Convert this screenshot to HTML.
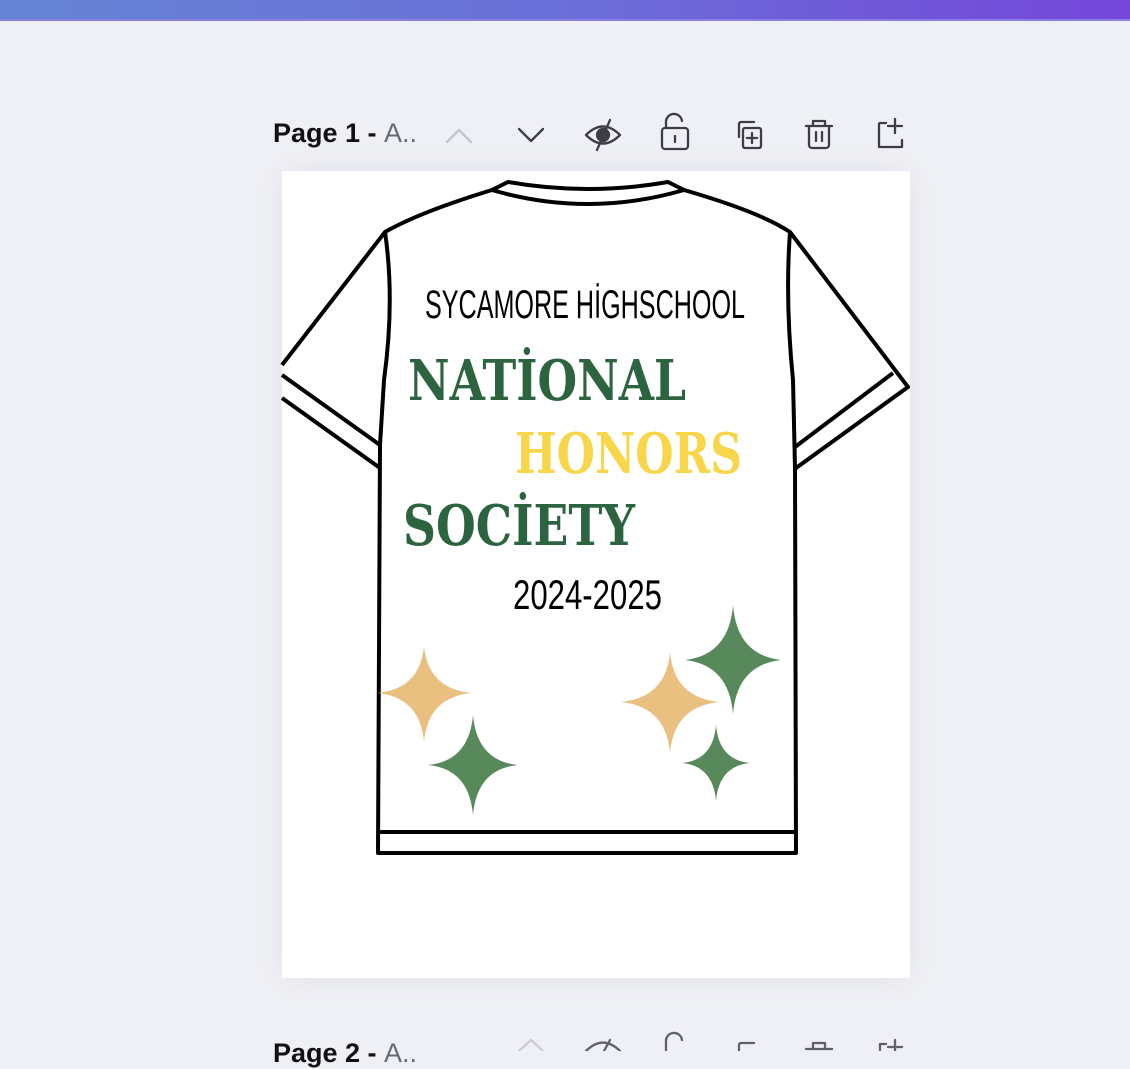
<!DOCTYPE html>
<html><head><meta charset="utf-8"><style>
html,body{margin:0;padding:0;width:1130px;height:1051px;overflow:hidden;background:#eff0f5;font-family:"Liberation Sans",sans-serif}
.bar{position:absolute;left:0;top:0;width:1130px;height:19px;background:linear-gradient(90deg,#6584d4,#6b6fd8 50%,#7446d9);border-bottom:2px solid #8a7fe0}
.page{position:absolute;left:282px;top:171px;width:628px;height:807px;background:#fff;box-shadow:0 0 30px rgba(0,0,0,0.06)}
.lbl{position:absolute;font-size:27px;font-weight:bold;color:#111}
.lbl span{color:#666a73;font-weight:normal}
svg{position:absolute;left:0;top:0}
</style></head><body>
<div class="bar"></div>
<div class="page"></div>
<div class="lbl" style="left:273px;top:118px">Page 1 - <span>A..</span></div>
<div class="lbl" style="left:273px;top:1038px">Page 2 - <span>A..</span></div>
<svg width="1130" height="1051" viewBox="0 0 1130 1051">
<g fill="none" stroke-linecap="round" stroke-linejoin="round" stroke-width="2.3">
 <path d="M447,142 L459,130 L471,142" stroke="#c4c5cc"/>
 <path d="M519,129 L531,141 L543,129" stroke="#3d3e45"/>
 <g stroke="#3d3e45">
 <path d="M586,135 Q603,118 620,135 Q603,152 586,135Z"/>
 <circle cx="603" cy="135" r="6" fill="#3d3e45"/>
 <line x1="610" y1="120" x2="597" y2="150"/>
 <rect x="662" y="128" width="26" height="21" rx="3"/>
 <path d="M666,128 V123 A8,8 0 0 1 682,121"/>
 <line x1="675" y1="136" x2="675" y2="142"/>
 <path d="M739,137 V124 a2,2 0 0 1 2,-2 H754"/>
 <rect x="743" y="128" width="18" height="20" rx="2"/>
 <path d="M752,133 V143 M747,138 H757"/>
 <path d="M806,126 H832 M813,126 V121 H825 V126 M809,126 V145 a3,3 0 0 0 3,3 H826 a3,3 0 0 0 3,-3 V126 M816,132 V141 M822,132 V141"/>
 <path d="M886,123 H880 a1,1 0 0 0 -1,1 V147 H902 V140 M895,119 V133 M888,126 H902"/>
 </g>
 <g stroke="#3d3e45" opacity="0.8">
 <path d="M519,1051 L531,1040 L543,1051" stroke="#c4c5cc"/>
 <path d="M586,1051 Q603,1034 620,1051"/><line x1="610" y1="1040" x2="604" y2="1051"/>
 <path d="M666,1051 V1042 A8,8 0 0 1 682,1040"/>
 <path d="M739,1051 V1045 a2,2 0 0 1 2,-2 H754"/>
 <path d="M806,1049 H832 M813,1049 V1043 H825 V1049"/>
 <path d="M895,1040 V1051 M888,1047 H902 M886,1044 H880 V1051"/>
 </g>
</g>
<g fill="none" stroke="#000" stroke-width="4" stroke-linejoin="round">
 <path d="M508,182 Q588,196 668,182 L684,190 Q588,218 492,190 Z"/>
 <path d="M492,190 Q420,212 385,232 L282,365"/>
 <path d="M282,375 L380,445 M282,398 L380,468"/>
 <path d="M385,232 Q395,300 384,380 L380,445 L378,853 H796 L795,468 L793,380 Q785,300 790,232 Q760,212 684,190"/>
 <path d="M790,232 L908,387 L796,468 M893,373 L795,447"/>
 <path d="M378,832 H795"/>
</g>
<g font-family="Liberation Sans Narrow,Liberation Sans,sans-serif">
 <text x="425" y="318" font-size="40" textLength="320" lengthAdjust="spacingAndGlyphs" fill="#000">SYCAMORE HİGHSCHOOL</text>
 <text x="513" y="609" font-size="42" textLength="149" lengthAdjust="spacingAndGlyphs" fill="#000">2024-2025</text>
</g>
<g font-family="DejaVu Serif,serif" font-weight="bold">
 <text x="408" y="400" font-size="56" textLength="278" lengthAdjust="spacingAndGlyphs" fill="#2c6440">NATİONAL</text>
 <text x="515" y="473" font-size="56" textLength="227" lengthAdjust="spacingAndGlyphs" fill="#f7d64a">HONORS</text>
 <text x="403" y="545" font-size="56" textLength="232" lengthAdjust="spacingAndGlyphs" fill="#2c6440">SOCİETY</text>
</g>
<path fill="#e9c07f" d="M424,646 Q428,689 472,693 Q428,697 424,742 Q420,697 377,693 Q420,689 424,646Z"/>
<path fill="#e9c07f" d="M670,652 Q674,698 720,702 Q674,706 670,753 Q666,706 620,702 Q666,698 670,652Z"/>
<path fill="#57895b" d="M473,715 Q477,761 518,765 Q477,769 473,815 Q469,769 428,765 Q469,761 473,715Z"/>
<path fill="#57895b" d="M733,605 Q737,655 781,660 Q737,665 733,714 Q729,665 685,660 Q729,655 733,605Z"/>
<path fill="#57895b" d="M716,725 Q719,760 750,763 Q719,766 716,801 Q713,766 682,763 Q713,760 716,725Z"/>
</svg>
</body></html>
